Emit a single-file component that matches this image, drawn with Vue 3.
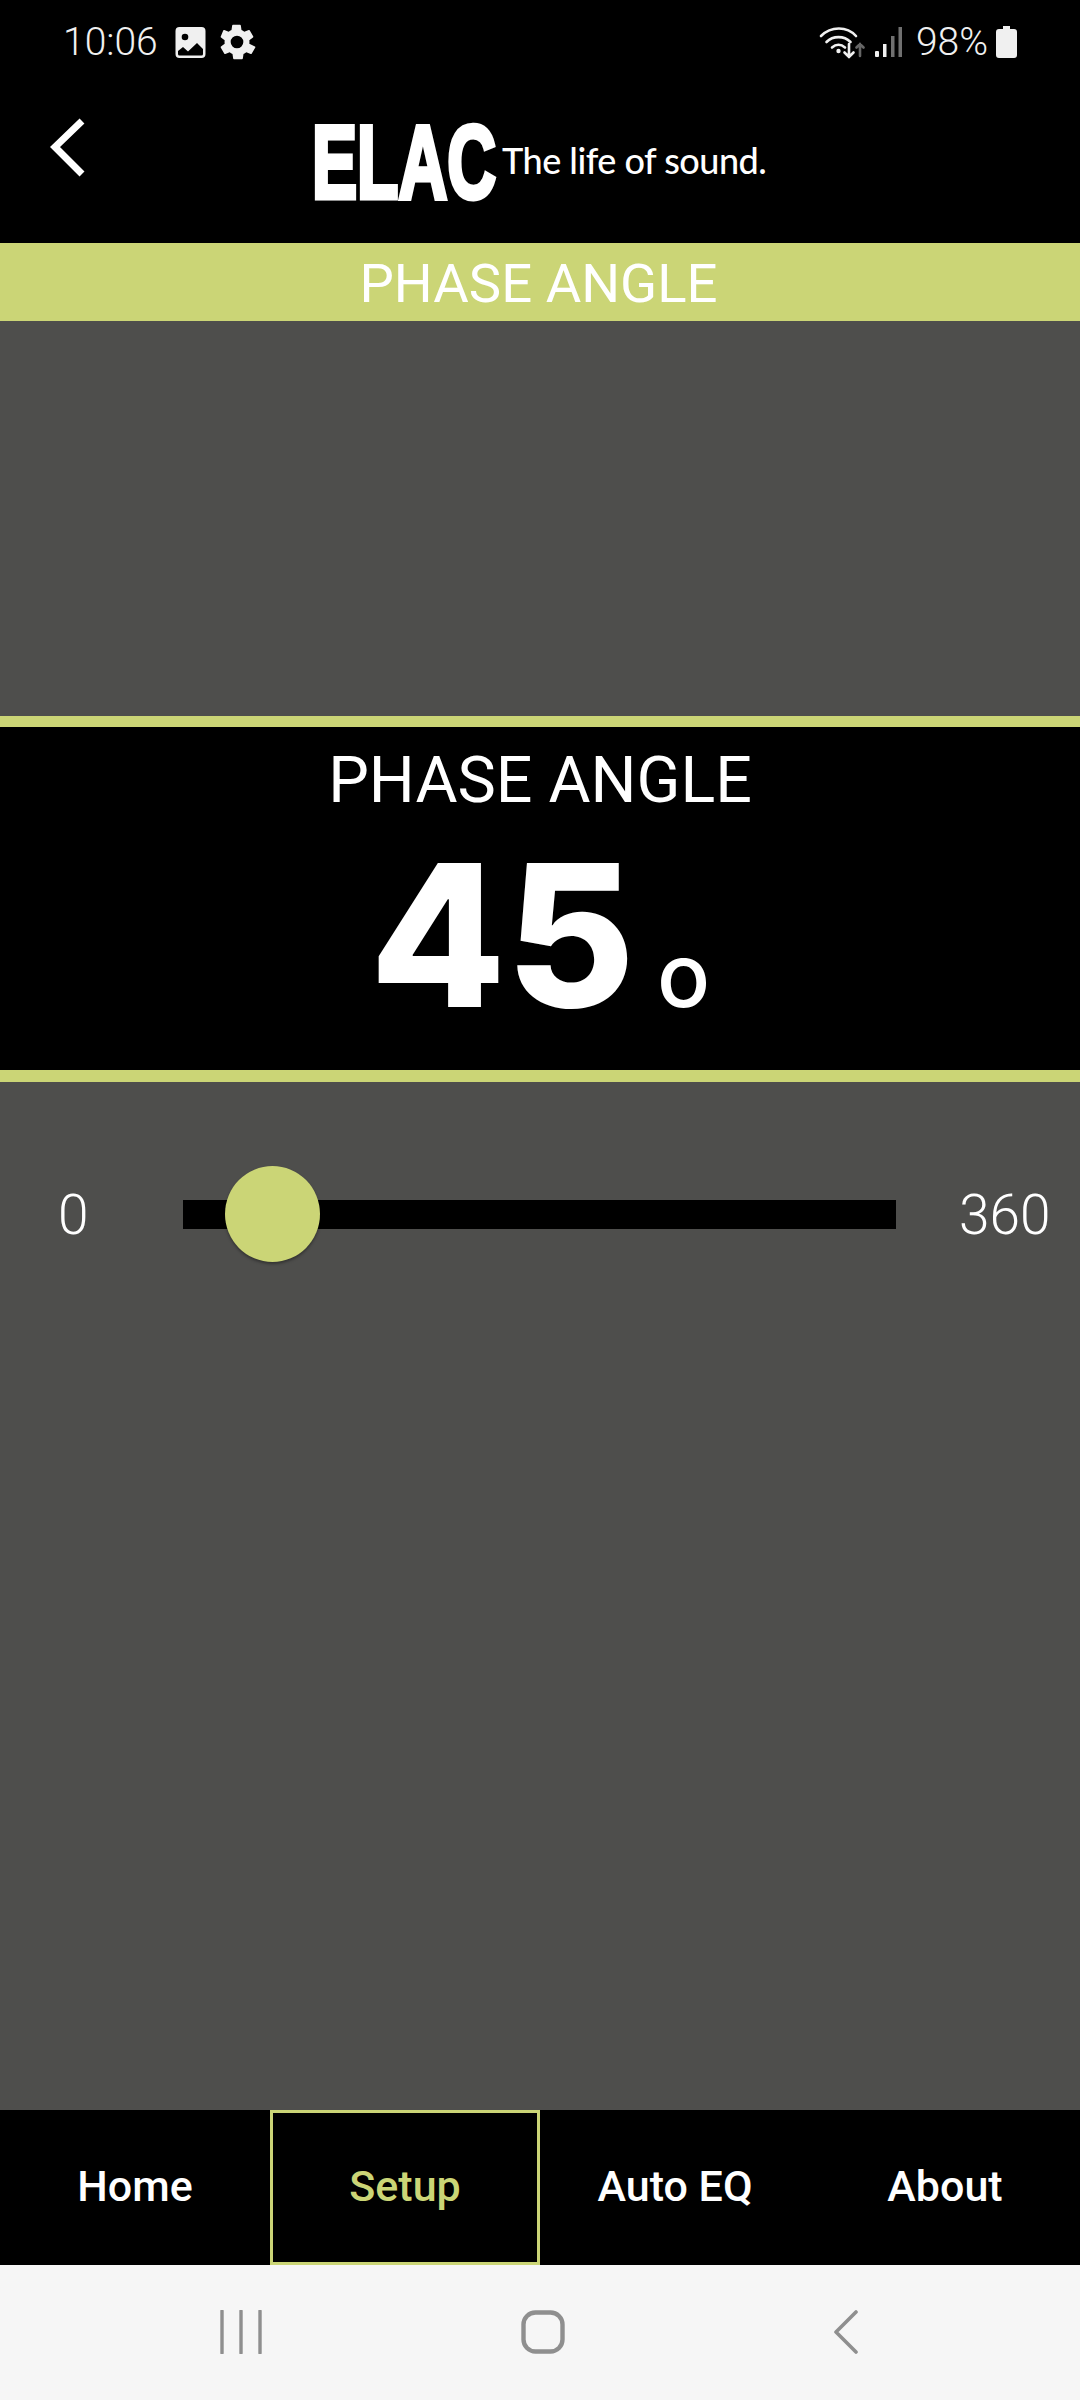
<script setup>
const tabs = ['Home', 'Setup', 'Auto EQ', 'About']
</script>

<template>
  <div class="screen">
    <div class="status">
      <div class="status-left">
        <span class="time">10:06</span>
        <svg class="ic-img" viewBox="0 0 30 31"><path fill-rule="evenodd" d="M4 0h22a4 4 0 0 1 4 4v23a4 4 0 0 1-4 4H4a4 4 0 0 1-4-4V4a4 4 0 0 1 4-4zM2.500 24v3A1.500 1.500 0 0 0 4 28.500h22a1.500 1.500 0 0 0 1.500-1.500v-5l-6-6-9 8.500-5-4.500z" fill="#f0f0f0"/><circle cx="9.500" cy="10" r="3.300" fill="#000"/></svg>
        <svg class="ic-gear" viewBox="0 0 24 24"><path fill="#f0f0f0" d="M19.400 13a7.600 7.600 0 0 0 0-2l2.200-1.700a.5.5 0 0 0 .1-.7l-2.100-3.600a.5.5 0 0 0-.6-.2l-2.600 1a7.600 7.600 0 0 0-1.700-1l-.4-2.700a.5.500 0 0 0-.5-.4H9.600a.5.500 0 0 0-.5.400l-.4 2.700a7.600 7.600 0 0 0-1.700 1l-2.600-1a.5.500 0 0 0-.6.200L2.300 8.600a.5.500 0 0 0 .1.700L4.600 11a7.600 7.600 0 0 0 0 2l-2.200 1.700a.5.500 0 0 0-.1.700l2.100 3.600a.5.500 0 0 0 .6.200l2.600-1a7.600 7.600 0 0 0 1.700 1l.4 2.700a.5.500 0 0 0 .5.400h4.800a.5.500 0 0 0 .5-.400l.4-2.700a7.600 7.600 0 0 0 1.700-1l2.600 1a.5.500 0 0 0 .6-.2l2.100-3.600a.5.500 0 0 0-.1-.7zM12 15.800a3.800 3.800 0 1 1 0-7.600 3.800 3.800 0 0 1 0 7.600z"/></svg>
      </div>
      <div class="status-right">
        <svg class="ic-wifi" viewBox="0 0 46 34" fill="none" stroke-linecap="round">
          <path d="M2 11C12 1 28 1 37 11" stroke="#f0f0f0" stroke-width="2.600"/>
          <path d="M7.500 17C14 10.500 25 10.500 31.500 17" stroke="#f0f0f0" stroke-width="2.600"/>
          <path d="M13 22.500C17 19 22 19 26 22.500" stroke="#f0f0f0" stroke-width="2.600"/>
          <circle cx="19.500" cy="26" r="2.200" fill="#f0f0f0"/>
          <path d="M30 19V32M25.500 27.500 30 32l4.500-4.500" stroke="#f0f0f0" stroke-width="2.600"/>
          <path d="M41 31V19M37.500 22.500 41 19l3.500 3.500" stroke="#666" stroke-width="2.600"/>
        </svg>
        <svg class="ic-signal" viewBox="0 0 27 30">
          <rect x="0" y="24" width="4" height="6" rx="1" fill="#f0f0f0"/>
          <rect x="8" y="17" width="3.500" height="13" fill="#f0f0f0"/>
          <rect x="16" y="9" width="3.500" height="21" fill="#707070"/>
          <rect x="23.500" y="0" width="3.500" height="30" fill="#707070"/>
        </svg>
        <span class="pct">98%</span>
        <svg class="ic-batt" viewBox="0 0 21 32"><path fill="#f0f0f0" d="M7 0h7v3h4a3 3 0 0 1 3 3v23a3 3 0 0 1-3 3H3a3 3 0 0 1-3-3V6a3 3 0 0 1 3-3h4z"/></svg>
      </div>
    </div>

    <header class="header">
      <svg class="back" viewBox="0 0 38 62" fill="none"><path d="M33 4 6 30l27 27" stroke="#fff" stroke-width="7"/></svg>
      <div class="logo">
        <div class="logo-mark"><span class="logo-text">ELAC</span></div>
        <span class="tagline">The life of sound.</span>
      </div>
    </header>

    <div class="title-bar">PHASE ANGLE</div>
    <div class="spacer-top"></div>

    <section class="readout">
      <div class="readout-title">PHASE ANGLE</div>
      <div class="readout-value"><span class="num">45</span><span class="deg">o</span></div>
    </section>

    <main class="body">
      <div class="slider-row">
        <span class="end end-min">0</span>
        <div class="track"><div class="thumb"></div></div>
        <span class="end end-max">360</span>
      </div>
    </main>

    <nav class="tabs">
      <div v-for="t in tabs" :key="t" class="tab" :class="{ active: t === 'Setup' }">{{ t }}</div>
    </nav>

    <div class="sysnav">
      <svg class="nav-recents" viewBox="0 0 44 44"><path d="M2 1v42M21 1v42M40 1v42" stroke="#8f8f8f" stroke-width="3.400" stroke-linecap="round" fill="none"/></svg>
      <svg class="nav-home" viewBox="0 0 44 44"><rect x="2.500" y="2.500" width="39" height="39" rx="12" stroke="#8f8f8f" stroke-width="4.400" fill="none"/></svg>
      <svg class="nav-back" viewBox="0 0 24 44"><path d="M22 2 2 22l20 20" stroke="#8f8f8f" stroke-width="3.600" stroke-linecap="round" stroke-linejoin="round" fill="none"/></svg>
    </div>
  </div>
</template>

<style scoped>
.screen {
  width: 1080px;
  height: 2400px;
  display: flex;
  flex-direction: column;
  background: #000;
  font-family: Roboto, sans-serif;
  color: #fff;
  overflow: hidden;
}
.status {
  height: 84px;
  display: flex;
  justify-content: space-between;
  align-items: center;
  padding: 0 63px 0 63px;
}
.status-left, .status-right { display: flex; align-items: center; }
.time, .pct { font-size: 39px; font-weight: 300; color: #f0f0f0; }
.ic-img { width: 31px; height: 31px; margin-left: 17px; }
.ic-gear { width: 40px; height: 40px; margin-left: 11px; }
.ic-wifi { width: 46px; height: 34px; }
.ic-signal { width: 27px; height: 30px; margin-left: 10px; }
.pct { margin-left: 14px; }
.ic-batt { width: 21px; height: 32px; margin-left: 8px; }

.header {
  height: 159px;
  display: flex;
  align-items: flex-start;
}
.back { width: 38px; height: 62px; margin: 33px 0 0 49px; }
.logo { display: flex; align-items: flex-start; margin: 38px 0 0 227px; }
.logo-mark { width: 183px; height: 80px; flex: none; }
.logo-text {
  display: inline-block;
  font-family: "Liberation Sans", sans-serif;
  font-weight: 700;
  font-size: 104px;
  line-height: 80px;
  color: #fff;
  -webkit-text-stroke: 5px #fff;
  white-space: nowrap;
  transform: translateX(-2px) scaleX(0.65);
  transform-origin: left center;
}
.tagline {
  font-family: Lato, sans-serif;
  font-size: 36px;
  font-weight: 500;
  margin: 16px 0 0 5px;
  letter-spacing: -0.5px;
}
.title-bar {
  height: 78px;
  background: #cbd576;
  display: flex;
  align-items: center;
  justify-content: center;
  font-size: 54.500px;
  padding: 1px 3px 0 0;
  box-sizing: border-box;
}
.spacer-top { height: 395px; background: #4e4e4c; }
.readout {
  height: 366px;
  box-sizing: border-box;
  border-top: 11px solid #cbd576;
  border-bottom: 12px solid #cbd576;
  background: #000;
  display: flex;
  flex-direction: column;
  align-items: center;
}
.readout-title {
  font-size: 64.500px;
  line-height: 70px;
  margin-top: 18px;
}
.readout-value { display: flex; align-items: baseline; line-height: 240px; }
.num { font-family: Inter, sans-serif; font-weight: 800; font-size: 198px; }
.deg { font-family: Inter, sans-serif; font-weight: 500; font-size: 88px; margin-left: 22px; }

.body { flex: 1; background: #4e4e4c; padding-top: 84px; }
.slider-row { height: 96px; display: flex; align-items: center; }
.end { font-size: 55px; font-weight: 300; padding-top: 2px; }
.end-min { width: 183px; box-sizing: border-box; padding-left: 58px; }
.end-max { margin-left: 63px; }
.track { width: 713px; height: 29px; background: #000; position: relative; }
.thumb {
  position: absolute;
  left: 42px;
  top: -34px;
  width: 95px;
  height: 96px;
  border-radius: 50%;
  background: #cbd576;
  box-shadow: 0 2px 3px rgba(0,0,0,.35);
}

.tabs { height: 155px; display: flex; background: #000; }
.tab {
  width: 270px;
  box-sizing: border-box;
  padding-top: 51px;
  text-align: center;
  font-size: 43px;
  font-weight: 500;
  line-height: 50px;
}
.tab.active { color: #cbd576; border: 3px solid #cbd576; padding-top: 48px; }

.sysnav { height: 135px; background: #f6f6f6; position: relative; display: flex; }
.nav-recents { position: absolute; left: 220px; top: 45px; width: 44px; height: 44px; }
.nav-home { position: absolute; left: 521px; top: 45px; width: 44px; height: 44px; }
.nav-back { position: absolute; left: 834px; top: 45px; width: 24px; height: 44px; }
</style>
